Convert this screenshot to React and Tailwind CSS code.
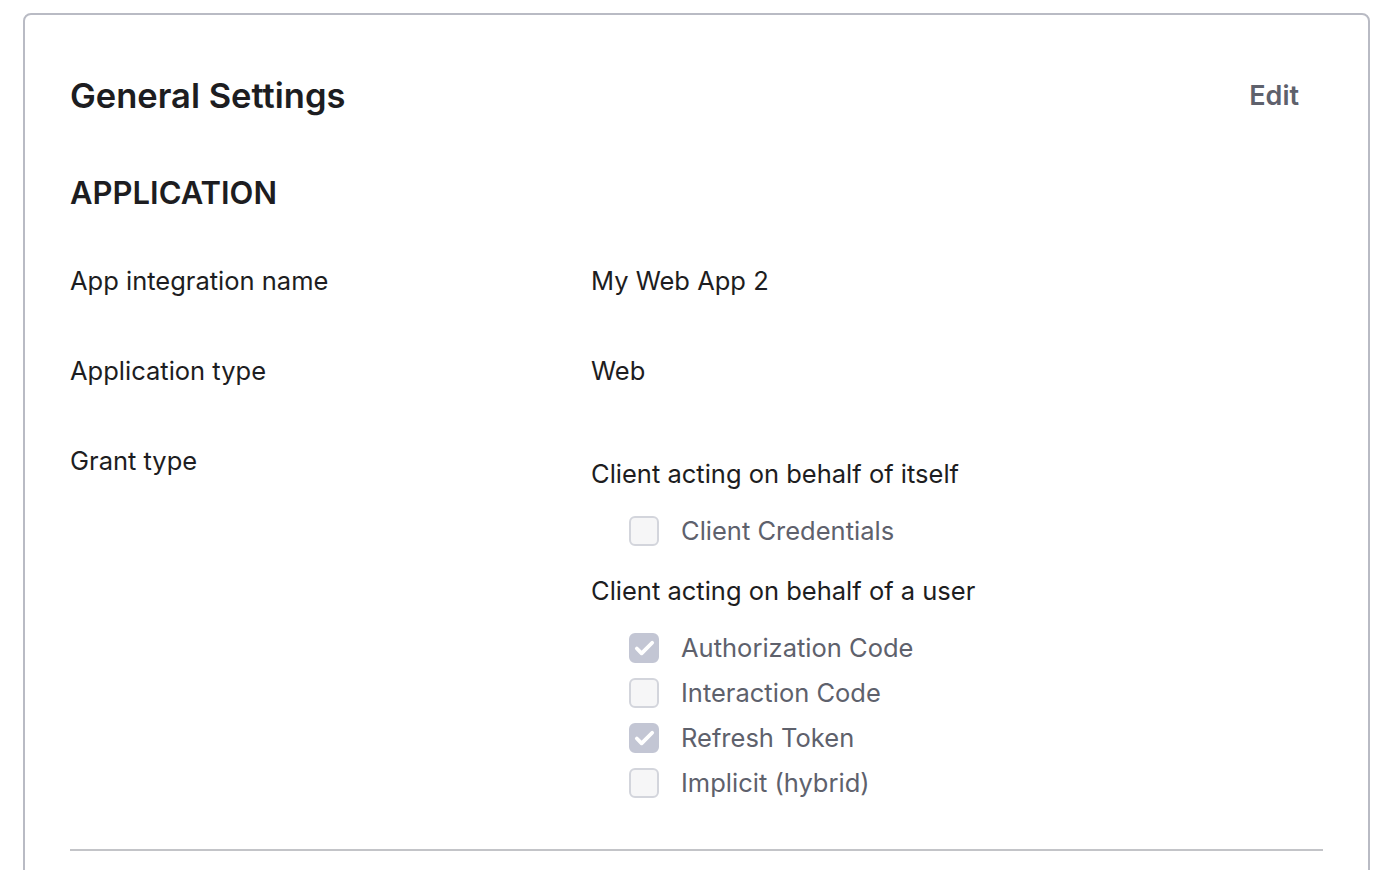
import { Check } from 'lucide-react'

const grants = [
  { label: 'Authorization Code', checked: true },
  { label: 'Interaction Code', checked: false },
  { label: 'Refresh Token', checked: true },
  { label: 'Implicit (hybrid)', checked: false },
]

function Checkbox({ label, checked }) {
  return (
    <div className="flex items-center h-[45px] pl-[38px]">
      <span
        className={`w-[30px] h-[30px] rounded-[6px] flex items-center justify-center ${
          checked ? 'bg-[#c3c6d4] border-2 border-[#c3c6d4]' : 'bg-[#f6f6f7] border-2 border-[#d3d5dc]'
        }`}
      >
        {checked && <Check size={23} strokeWidth={4} className="text-white" />}
      </span>
      <span className="ml-[22px] text-[25.5px] leading-[34px] text-[#5e616c]">{label}</span>
    </div>
  )
}

function Row({ label, children }) {
  return (
    <div className="flex items-center h-[50px]">
      <div className="w-[521px] text-[25.5px] leading-[34px] text-[#1d1d21]">{label}</div>
      <div className="flex-1 text-[25.5px] leading-[34px] text-[#1d1d21]">{children}</div>
    </div>
  )
}

export default function App() {
  return (
    <div className="bg-white h-[870px] overflow-hidden pt-[13px] pl-[23px] pr-[30px] font-['Inter',sans-serif]">
      <div className="border-2 border-[#b9bbc4] rounded-[8px] h-[900px] pl-[45px] pr-[45px]">
        {/* Header */}
        <div className="flex items-center justify-between pt-[61px]">
          <h1 className="text-[34.5px] font-semibold text-[#1d1d21] leading-[38px]">General Settings</h1>
          <button className="text-[27px] font-semibold text-[#5e616c] mr-[24px]">Edit</button>
        </div>

        <h2 className="mt-[59px] text-[31px] font-semibold text-[#1d1d21] leading-[34px]">APPLICATION</h2>

        <div className="mt-[46px]">
          <Row label="App integration name">My Web App 2</Row>
        </div>
        <div className="mt-[40px]">
          <Row label="Application type">Web</Row>
        </div>

        <div className="mt-[44px] flex">
          <div className="w-[521px] text-[25.5px] leading-[34px] text-[#1d1d21] pt-[4px]">Grant type</div>
          <div className="flex-1">
            <div className="text-[25.5px] text-[#1d1d21] mt-[17px] leading-[34px]">Client acting on behalf of itself</div>
            <div className="mt-[18px]">
              <Checkbox label="Client Credentials" checked={false} />
            </div>
            <div className="text-[25.5px] text-[#1d1d21] mt-[20px] leading-[34px]">Client acting on behalf of a user</div>
            <div className="mt-[18px]">
              {grants.map((g) => (
                <Checkbox key={g.label} label={g.label} checked={g.checked} />
              ))}
            </div>
          </div>
        </div>

        <div className="mt-[43px] border-t-2 border-[#c3c4c8]" />
      </div>
    </div>
  )
}
